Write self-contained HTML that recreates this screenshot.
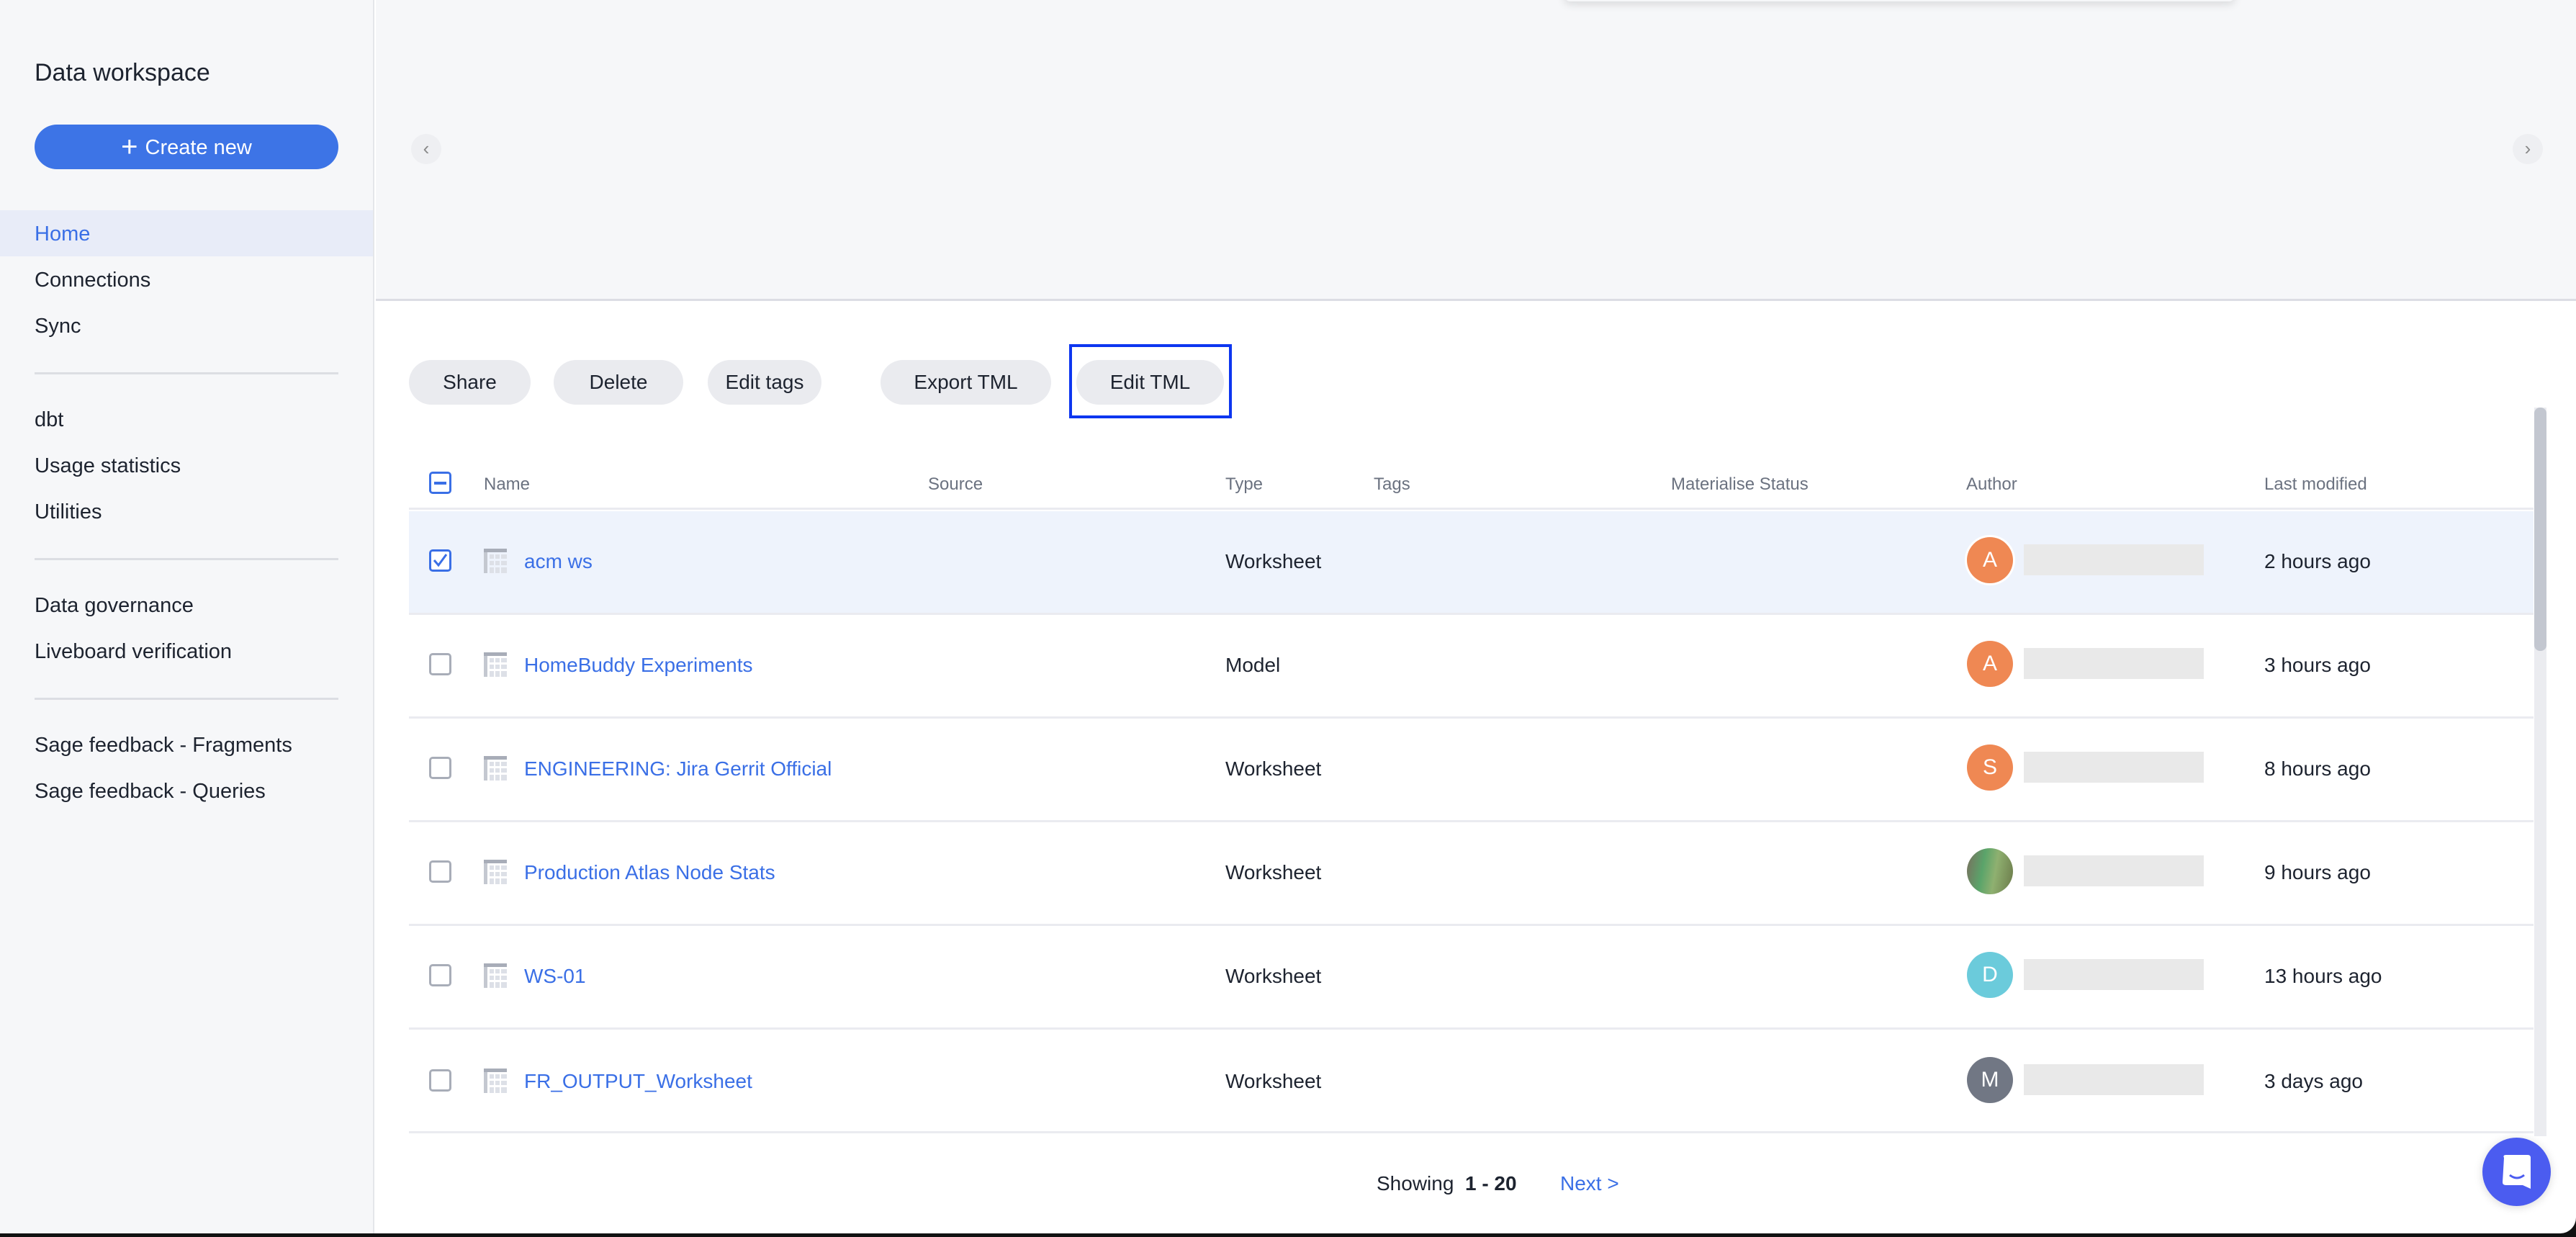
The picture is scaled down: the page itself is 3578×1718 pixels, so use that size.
<!DOCTYPE html>
<html><head><meta charset="utf-8"><style>
*{margin:0;padding:0;box-sizing:border-box}
body{width:3578px;height:1718px;overflow:hidden;background:#111;font-family:"Liberation Sans",sans-serif;color:#1d232f;position:relative}
.page{position:absolute;left:0;top:0;width:3578px;height:1713px;background:#fff;border-bottom-right-radius:22px;overflow:hidden}
.side{position:absolute;left:0;top:0;width:520px;height:1713px;background:#f6f7f9;border-right:2px solid #e4e6ea}
.abs{position:absolute;white-space:nowrap}
.nav{position:absolute;left:48px;font-size:29px;color:#1d232f;margin-top:2px}
.div{position:absolute;left:48px;width:422px;height:3px;background:#dcdee3}
.top{position:absolute;left:522px;top:0;width:3056px;height:418px;background:#f6f7f9;border-bottom:3px solid #dcdde4}
.btn{position:absolute;top:500px;height:62px;border-radius:31px;background:#eaebef;font-size:28px;line-height:62px;text-align:center;color:#1d232f}
.hd{position:absolute;top:659px;font-size:24px;color:#6b7280}
.row{position:absolute;left:568px;width:2951px;height:144px;border-bottom:3px solid #eaebf0}
.cb{position:absolute;left:28px;width:31px;height:31px;border:3px solid #a8adb8;border-radius:5px;background:#fff}
.ic{position:absolute;left:104px;width:32px;height:34px}
.nm{position:absolute;left:160px;font-size:28px;color:#3a6fe6;margin-top:2px}
.ty{position:absolute;left:1134px;font-size:28px;color:#1d232f;margin-top:2px}
.av{position:absolute;left:2164px;width:64px;height:64px;border-radius:50%;color:#fff;font-size:30px;text-align:center;line-height:64px}
.ph{position:absolute;left:2243px;width:250px;height:43px;background:#e9e9e9}
.tm{position:absolute;left:2577px;font-size:28px;color:#1d232f;margin-top:2px}
</style></head><body>
<div class="page">
<div class="side">
  <div class="abs" style="left:48px;top:82px;font-size:34px;color:#1d232f">Data workspace</div>
  <div class="abs" style="left:48px;top:173px;width:422px;height:62px;border-radius:31px;background:#3d74e6;color:#fff;font-size:29px;line-height:62px;text-align:center">
    <span style="font-size:40px;vertical-align:-3px;margin-right:10px">+</span>Create new</div>
  <div class="abs" style="left:0;top:292px;width:518px;height:64px;background:#e8ecf8"></div>
  <div class="nav" style="top:307px;color:#3a6fe6">Home</div>
  <div class="nav" style="top:371px">Connections</div>
  <div class="nav" style="top:435px">Sync</div>
  <div class="div" style="top:517px"></div>
  <div class="nav" style="top:565px">dbt</div>
  <div class="nav" style="top:629px">Usage statistics</div>
  <div class="nav" style="top:693px">Utilities</div>
  <div class="div" style="top:775px"></div>
  <div class="nav" style="top:823px">Data governance</div>
  <div class="nav" style="top:887px">Liveboard verification</div>
  <div class="div" style="top:969px"></div>
  <div class="nav" style="top:1017px">Sage feedback - Fragments</div>
  <div class="nav" style="top:1081px">Sage feedback - Queries</div>
</div>
<div class="top">
  <div class="abs" style="left:1651px;top:-20px;width:931px;height:22px;box-shadow:0 4px 12px rgba(0,0,0,.12);background:#f6f7f9;border-radius:8px"></div>
  <div class="abs" style="left:49px;top:186px;width:42px;height:42px;border-radius:50%;background:#eeeff2;color:#888;font-size:26px;line-height:40px;text-align:center">‹</div>
  <div class="abs" style="left:2968px;top:186px;width:42px;height:42px;border-radius:50%;background:#eeeff2;color:#888;font-size:26px;line-height:40px;text-align:center">›</div>
</div>
<div class="btn" style="left:568px;width:169px">Share</div>
<div class="btn" style="left:769px;width:180px">Delete</div>
<div class="btn" style="left:983px;width:158px">Edit tags</div>
<div class="btn" style="left:1223px;width:237px">Export TML</div>
<div class="btn" style="left:1495px;width:205px">Edit TML</div>
<div class="abs" style="left:1485px;top:478px;width:226px;height:103px;border:4px solid #0d36f0"></div>

<div class="abs" style="left:596px;top:655px;width:31px;height:31px;border:3px solid #3a6fe6;border-radius:5px"><div style="position:absolute;left:4px;top:11px;width:17px;height:4px;background:#3a6fe6"></div></div>
<div class="hd" style="left:672px">Name</div>
<div class="hd" style="left:1289px">Source</div>
<div class="hd" style="left:1702px">Type</div>
<div class="hd" style="left:1908px">Tags</div>
<div class="hd" style="left:2321px">Materialise Status</div>
<div class="hd" style="left:2731px">Author</div>
<div class="hd" style="left:3145px">Last modified</div>
<div class="abs" style="left:568px;top:705px;width:2951px;height:3px;background:#eaebf0"></div>

<div class="row" style="top:710px;background:#eef3fc">
  <div class="cb" style="top:53px;border-color:#3a6fe6"><svg width="25" height="25" viewBox="0 0 25 25" style="position:absolute;left:0;top:0"><path d="M4 12 L10 19 L21 4" stroke="#3a6fe6" stroke-width="3" fill="none"/></svg></div>
  <svg class="ic" style="top:52px" viewBox="0 0 32 34"><rect width="32" height="5" fill="#a8adb8"/><rect y="5" width="5" height="29" fill="#c4c8d0"/><g fill="#dde0e7"><rect x="8" y="8" width="6" height="6"/><rect x="16" y="8" width="6" height="6"/><rect x="24" y="8" width="8" height="6"/><rect x="8" y="17" width="6" height="6"/><rect x="16" y="17" width="6" height="6"/><rect x="24" y="17" width="8" height="6"/><rect x="8" y="26" width="6" height="8"/><rect x="16" y="26" width="6" height="8"/><rect x="24" y="26" width="8" height="8"/></g></svg>
  <div class="nm" style="top:52px">acm ws</div><div class="ty" style="top:52px">Worksheet</div>
  <div class="av" style="top:36px;background:#ef8853;box-shadow:0 0 0 3px #fff">A</div><div class="ph" style="top:46px"></div>
  <div class="tm" style="top:52px">2 hours ago</div>
</div>
<div class="row" style="top:854px">
  <div class="cb" style="top:53px"></div>
  <svg class="ic" style="top:52px" viewBox="0 0 32 34"><rect width="32" height="5" fill="#a8adb8"/><rect y="5" width="5" height="29" fill="#c4c8d0"/><g fill="#dde0e7"><rect x="8" y="8" width="6" height="6"/><rect x="16" y="8" width="6" height="6"/><rect x="24" y="8" width="8" height="6"/><rect x="8" y="17" width="6" height="6"/><rect x="16" y="17" width="6" height="6"/><rect x="24" y="17" width="8" height="6"/><rect x="8" y="26" width="6" height="8"/><rect x="16" y="26" width="6" height="8"/><rect x="24" y="26" width="8" height="8"/></g></svg>
  <div class="nm" style="top:52px">HomeBuddy Experiments</div><div class="ty" style="top:52px">Model</div>
  <div class="av" style="top:36px;background:#ef8853">A</div><div class="ph" style="top:46px"></div>
  <div class="tm" style="top:52px">3 hours ago</div>
</div>
<div class="row" style="top:998px">
  <div class="cb" style="top:53px"></div>
  <svg class="ic" style="top:52px" viewBox="0 0 32 34"><rect width="32" height="5" fill="#a8adb8"/><rect y="5" width="5" height="29" fill="#c4c8d0"/><g fill="#dde0e7"><rect x="8" y="8" width="6" height="6"/><rect x="16" y="8" width="6" height="6"/><rect x="24" y="8" width="8" height="6"/><rect x="8" y="17" width="6" height="6"/><rect x="16" y="17" width="6" height="6"/><rect x="24" y="17" width="8" height="6"/><rect x="8" y="26" width="6" height="8"/><rect x="16" y="26" width="6" height="8"/><rect x="24" y="26" width="8" height="8"/></g></svg>
  <div class="nm" style="top:52px">ENGINEERING: Jira Gerrit Official</div><div class="ty" style="top:52px">Worksheet</div>
  <div class="av" style="top:36px;background:#ef8853">S</div><div class="ph" style="top:46px"></div>
  <div class="tm" style="top:52px">8 hours ago</div>
</div>
<div class="row" style="top:1142px">
  <div class="cb" style="top:53px"></div>
  <svg class="ic" style="top:52px" viewBox="0 0 32 34"><rect width="32" height="5" fill="#a8adb8"/><rect y="5" width="5" height="29" fill="#c4c8d0"/><g fill="#dde0e7"><rect x="8" y="8" width="6" height="6"/><rect x="16" y="8" width="6" height="6"/><rect x="24" y="8" width="8" height="6"/><rect x="8" y="17" width="6" height="6"/><rect x="16" y="17" width="6" height="6"/><rect x="24" y="17" width="8" height="6"/><rect x="8" y="26" width="6" height="8"/><rect x="16" y="26" width="6" height="8"/><rect x="24" y="26" width="8" height="8"/></g></svg>
  <div class="nm" style="top:52px">Production Atlas Node Stats</div><div class="ty" style="top:52px">Worksheet</div>
  <div class="av" style="top:36px;background:linear-gradient(100deg,#7a6e5e 0%,#5aa46a 35%,#8fb070 60%,#6b7a4a 100%)"></div><div class="ph" style="top:46px"></div>
  <div class="tm" style="top:52px">9 hours ago</div>
</div>
<div class="row" style="top:1286px">
  <div class="cb" style="top:53px"></div>
  <svg class="ic" style="top:52px" viewBox="0 0 32 34"><rect width="32" height="5" fill="#a8adb8"/><rect y="5" width="5" height="29" fill="#c4c8d0"/><g fill="#dde0e7"><rect x="8" y="8" width="6" height="6"/><rect x="16" y="8" width="6" height="6"/><rect x="24" y="8" width="8" height="6"/><rect x="8" y="17" width="6" height="6"/><rect x="16" y="17" width="6" height="6"/><rect x="24" y="17" width="8" height="6"/><rect x="8" y="26" width="6" height="8"/><rect x="16" y="26" width="6" height="8"/><rect x="24" y="26" width="8" height="8"/></g></svg>
  <div class="nm" style="top:52px">WS-01</div><div class="ty" style="top:52px">Worksheet</div>
  <div class="av" style="top:36px;background:#6bcbdb">D</div><div class="ph" style="top:46px"></div>
  <div class="tm" style="top:52px">13 hours ago</div>
</div>
<div class="row" style="top:1430px">
  <div class="cb" style="top:55px"></div>
  <svg class="ic" style="top:54px" viewBox="0 0 32 34"><rect width="32" height="5" fill="#a8adb8"/><rect y="5" width="5" height="29" fill="#c4c8d0"/><g fill="#dde0e7"><rect x="8" y="8" width="6" height="6"/><rect x="16" y="8" width="6" height="6"/><rect x="24" y="8" width="8" height="6"/><rect x="8" y="17" width="6" height="6"/><rect x="16" y="17" width="6" height="6"/><rect x="24" y="17" width="8" height="6"/><rect x="8" y="26" width="6" height="8"/><rect x="16" y="26" width="6" height="8"/><rect x="24" y="26" width="8" height="8"/></g></svg>
  <div class="nm" style="top:54px">FR_OUTPUT_Worksheet</div><div class="ty" style="top:54px">Worksheet</div>
  <div class="av" style="top:38px;background:#717784">M</div><div class="ph" style="top:48px"></div>
  <div class="tm" style="top:54px">3 days ago</div>
</div>

<div class="abs" style="left:3520px;top:566px;width:17px;height:1012px;background:#ebecf0"></div>
<div class="abs" style="left:3520px;top:566px;width:17px;height:338px;background:#c3c7d0;border-radius:8px"></div>

<div class="abs" style="left:1912px;top:1628px;font-size:28px;color:#1d232f">Showing&nbsp; <b>1 - 20</b></div>
<div class="abs" style="left:2167px;top:1628px;font-size:28px;color:#3a6fe6">Next &gt;</div>

<div class="abs" style="left:3448px;top:1580px;width:95px;height:95px;border-radius:50%;background:#4b5cf0;box-shadow:0 2px 12px rgba(0,0,0,.15)">
  <svg width="95" height="95" viewBox="0 0 95 95"><path d="M30 28 Q28 24 33 24 H63 Q67 24 67 28 V71 L56 66 H33 Q28 66 28 62 Z" fill="#fff"/><path d="M38 52 Q48 60 58 52" stroke="#4b5cf0" stroke-width="3" fill="none"/></svg>
</div>
</div>
</body></html>
